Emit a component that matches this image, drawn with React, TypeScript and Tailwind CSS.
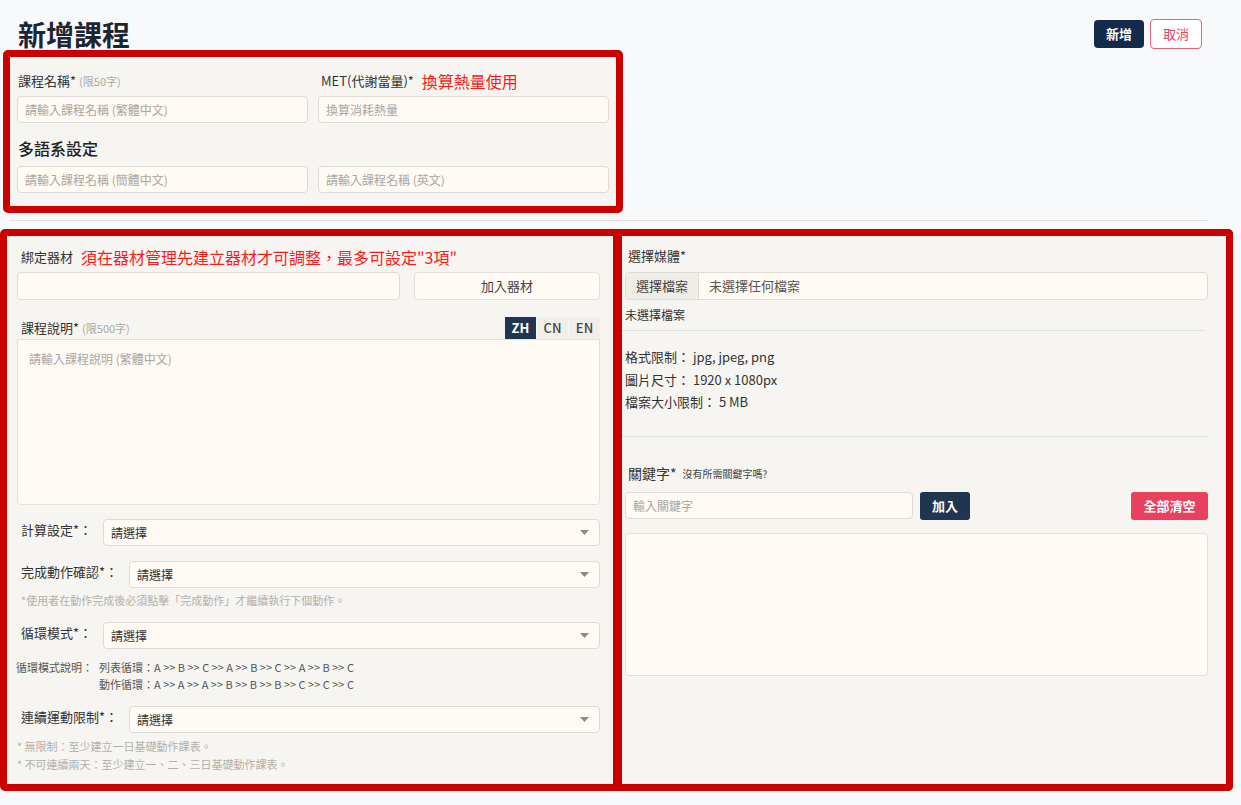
const FONT = '"Noto Sans CJK TC", "Noto Sans", sans-serif'

function TextInput({ placeholder, className = '' }: { placeholder?: string; className?: string }) {
  return (
    <div
      className={`flex h-[27px] items-center rounded-[4px] border border-[#dedbd6] bg-[#fffaf4] px-[7px] text-[12px] text-[#a9a6a2] ${className}`}
    >
      {placeholder}
    </div>
  )
}

function Select({ label, left }: { label: string; left: string }) {
  return (
    <div className="flex items-start">
      <span className={`pt-[1px] text-[13px] leading-[20px] text-[#333] ${left}`}>{label}</span>
      <div className="flex h-[27px] flex-1 items-center justify-between rounded-[4px] border border-[#dedbd6] bg-[#fffaf4] pl-[7px] pr-[10px] text-[12px] text-[#333]">
        請選擇
        <svg width="9" height="5" viewBox="0 0 9 5">
          <path d="M0 0h9L4.5 5z" fill="#8a8a8a" />
        </svg>
      </div>
    </div>
  )
}

export default function App() {
  return (
    <div className="min-h-screen bg-[#f8f9fb] pb-[14px]" style={{ fontFamily: FONT }}>
      {/* 頁首 */}
      <div className="flex h-[50px] items-start justify-between pl-[18px] pr-[39px]">
        <h1 className="pt-[17px] text-[28px] font-bold leading-[34px] text-[#1c2633]">新增課程</h1>
        <div className="mt-[20px] flex gap-[6px]">
          <button className="h-[28px] rounded-[4px] bg-[#122b4b] px-[12px] text-[13px] font-bold text-white">新增</button>
          <button className="-mt-[1px] h-[30px] rounded-[4px] border border-[#e8607c] bg-white px-[12px] text-[13px] text-[#e8405e]">
            取消
          </button>
        </div>
      </div>

      {/* 基本資料 */}
      <div className="ml-[3px] w-[620px] rounded-[5px] border-[7px] border-[#cc0000] bg-[#f6f5f1] px-[7px] pb-[13px] pt-[13px]">
        <div className="grid grid-cols-2 gap-x-[10px]">
          <div>
            <div className="flex h-[22px] items-center gap-[3px] pl-[1px]">
              <span className="text-[13px] text-[#333]">課程名稱*</span>
              <span className="text-[11px] text-[#aaa]">(限50字)</span>
            </div>
            <TextInput className="mt-[4px]" placeholder="請輸入課程名稱 (繁體中文)" />
          </div>
          <div>
            <div className="flex h-[22px] items-center gap-[8px] pl-[3px]">
              <span className="text-[13px] text-[#333]">MET(代謝當量)*</span>
              <span className="text-[16px] text-[#ff1a1a]">換算熱量使用</span>
            </div>
            <TextInput className="mt-[4px]" placeholder="換算消耗熱量" />
          </div>
        </div>
        <div className="mt-[14px] flex h-[22px] items-center pl-[1px] text-[16px] font-medium text-[#222]">多語系設定</div>
        <div className="mt-[7px] grid grid-cols-2 gap-x-[10px]">
          <TextInput placeholder="請輸入課程名稱 (簡體中文)" />
          <TextInput placeholder="請輸入課程名稱 (英文)" />
        </div>
      </div>

      <div className="ml-[10px] mt-[7px] w-[1198px] border-t border-[#e0e0e0]" />

      <div className="mt-[8px] flex">
        {/* 左欄：器材與說明 */}
        <div className="h-[562px] w-[622px] shrink-0 rounded-l-[5px] border-[7px] border-r-[9px] border-[#cc0000] bg-[#f6f5f1] pl-[10px] pr-[13px] pt-[10px]">
          <div className="flex h-[22px] items-center gap-[8px] pl-[4px]">
            <span className="text-[13px] text-[#333]">綁定器材</span>
            <span className="text-[16px] text-[#ff1a1a]">須在器材管理先建立器材才可調整，最多可設定"3項"</span>
          </div>
          <div className="mt-[4px] flex gap-[14px]">
            <div className="h-[28px] flex-1 rounded-[4px] border border-[#dedbd6] bg-[#fffaf4]" />
            <button className="h-[28px] w-[186px] rounded-[4px] border border-[#e4e1dc] bg-[#fffaf4] text-[13px] text-[#444]">
              加入器材
            </button>
          </div>

          <div className="mt-[17px] flex h-[22px] items-end justify-between">
            <div className="flex items-center gap-[3px] self-center pl-[4px]">
              <span className="text-[13px] text-[#333]">課程說明*</span>
              <span className="text-[11px] text-[#aaa]">(限500字)</span>
            </div>
            <div className="flex h-[22px] gap-[1px] text-[13px] font-medium">
              <span className="flex w-[31px] items-center justify-center bg-[#1f3550] font-bold text-white">ZH</span>
              <span className="flex w-[31px] items-center justify-center bg-[#f1efea] text-[#444]">CN</span>
              <span className="flex w-[31px] items-center justify-center bg-[#f1efea] text-[#444]">EN</span>
            </div>
          </div>
          <div className="h-[166px] rounded-b-[4px] border border-[#e4e1dc] bg-[#fffaf4] pl-[11px] pt-[10px] text-[12px] text-[#a9a6a2]">
            請輸入課程說明 (繁體中文)
          </div>

          <div className="mt-[14px]">
            <Select label="計算設定*：" left="w-[86px] pl-[4px]" />
          </div>
          <div className="mt-[15px]">
            <Select label="完成動作確認*：" left="w-[112px] pl-[4px]" />
          </div>
          <div className="mt-[3px] pl-[4px] text-[11px] leading-[18px] text-[#b3b0ab]">
            *使用者在動作完成後必須點擊「完成動作」才繼續執行下個動作。
          </div>
          <div className="mt-[13px]">
            <Select label="循環模式*：" left="w-[86px] pl-[4px]" />
          </div>
          <div className="-ml-[1px] mt-[10px] flex text-[11px] leading-[17px] text-[#555]">
            <span className="w-[83px] shrink-0 whitespace-nowrap">循環模式說明：</span>
            <div className="whitespace-nowrap">
              <div>列表循環：A &gt;&gt; B &gt;&gt; C &gt;&gt; A &gt;&gt; B &gt;&gt; C &gt;&gt; A &gt;&gt; B &gt;&gt; C</div>
              <div>動作循環：A &gt;&gt; A &gt;&gt; A &gt;&gt; B &gt;&gt; B &gt;&gt; B &gt;&gt; C &gt;&gt; C &gt;&gt; C</div>
            </div>
          </div>
          <div className="mt-[13px]">
            <Select label="連續運動限制*：" left="w-[112px] pl-[4px]" />
          </div>
          <div className="mt-[4px] text-[11px] leading-[18px] text-[#b3b0ab]">
            <div>* 無限制：至少建立一日基礎動作課表。</div>
            <div>* 不可連續兩天：至少建立一、二、三日基礎動作課表。</div>
          </div>
        </div>

        {/* 右欄：媒體與關鍵字 */}
        <div className="h-[562px] w-[611px] shrink-0 rounded-r-[5px] border-[7px] border-l-0 border-[#cc0000] bg-[#f6f5f1] pl-[3px] pr-[18px] pt-[9px]">
          <div className="flex h-[22px] items-center pl-[3px] text-[13px] text-[#333]">選擇媒體*</div>
          <div className="mt-[5px] flex h-[28px] overflow-hidden rounded-[4px] border border-[#dedbd6] bg-[#fffaf4] text-[13px]">
            <span className="flex w-[73px] items-center justify-center border-r border-[#dedbd6] bg-[#efede8] text-[#444]">選擇檔案</span>
            <span className="flex items-center pl-[10px] text-[#555]">未選擇任何檔案</span>
          </div>
          <div className="mt-[7px] text-[12px] leading-[16px] text-[#333]">未選擇檔案</div>
          <div className="-ml-[3px] mt-[7px] w-[583px] border-t border-[#e0e0e0]" />
          <div className="mt-[15px] text-[13px] leading-[22.5px] text-[#333]">
            <div>格式限制： jpg, jpeg, png</div>
            <div>圖片尺寸： 1920 x 1080px</div>
            <div>檔案大小限制： 5 MB</div>
          </div>
          <div className="-ml-[3px] mt-[22px] w-[587px] border-t border-[#e0e0e0]" />
          <div className="mt-[27px] flex h-[20px] items-center gap-[6px] pl-[3px]">
            <span className="text-[14px] text-[#333]">關鍵字*</span>
            <span className="text-[10px] text-[#444]">沒有所需關鍵字嗎?</span>
          </div>
          <div className="mt-[8px] flex items-center">
            <TextInput className="w-[288px]" placeholder="輸入關鍵字" />
            <button className="ml-[7px] h-[28px] w-[50px] rounded-[3px] bg-[#1f3550] text-[13px] font-bold text-white">加入</button>
            <button className="ml-auto h-[28px] w-[77px] rounded-[3px] bg-[#e8405e] text-[13px] font-bold text-white">全部清空</button>
          </div>
          <div className="mt-[13px] h-[143px] rounded-[4px] border border-[#e4e1dc] bg-[#fffaf4]" />
        </div>
      </div>
    </div>
  )
}
